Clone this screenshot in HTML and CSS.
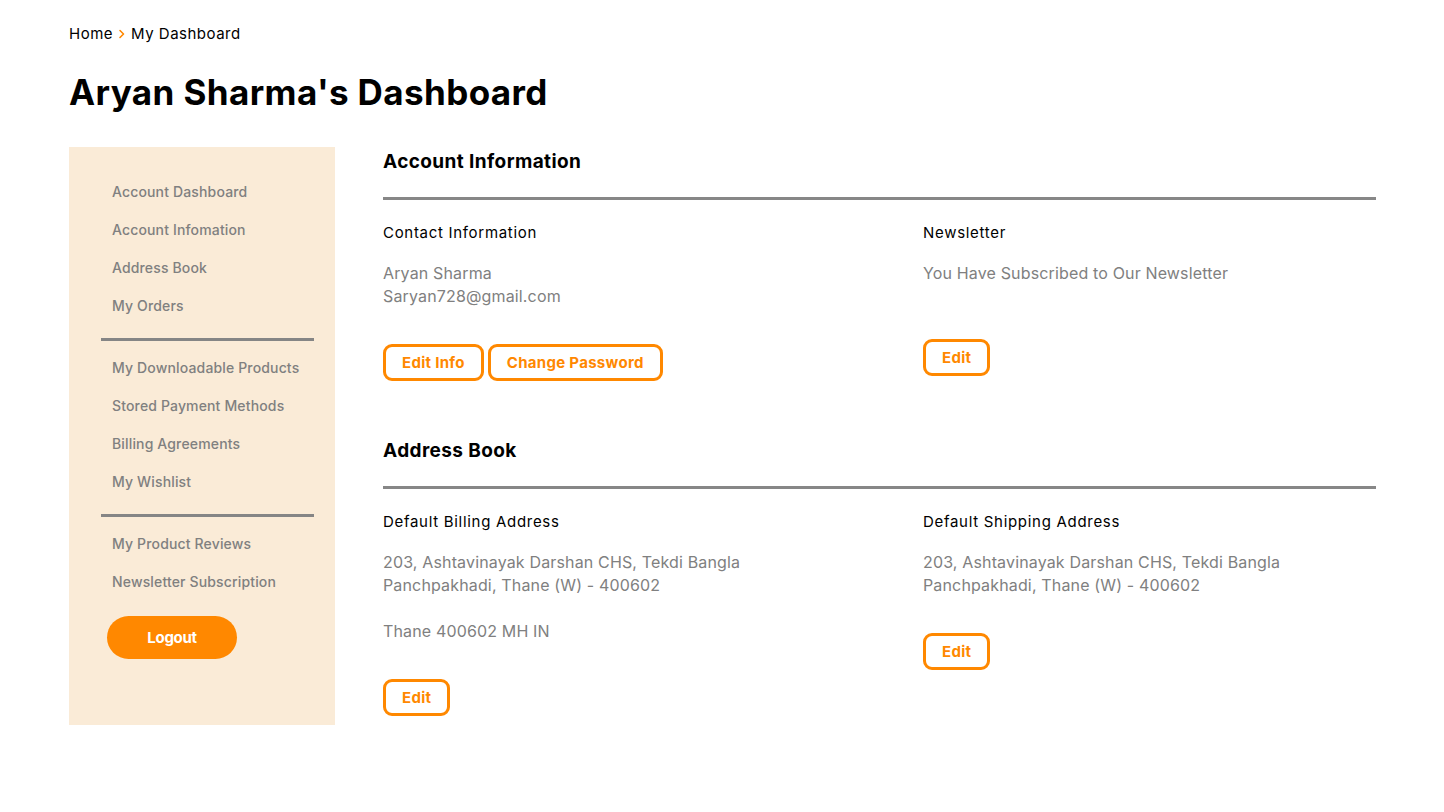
FILE: index.html
```html
<!DOCTYPE html>
<html lang="en">
<head>
<meta charset="utf-8">
<title>My Dashboard</title>
<link rel="stylesheet" href="styles.css">
</head>
<body>
<div class="page">
  <nav class="breadcrumb">
    <a href="#">Home</a>
    <span class="crumb-sep"><svg width="8" height="10" viewBox="0 0 8 10"><path d="M2 1.5 L5.5 5 L2 8.5" fill="none" stroke="#ff8800" stroke-width="1.6" stroke-linecap="round" stroke-linejoin="round"/></svg></span>
    <span>My Dashboard</span>
  </nav>
  <h1 class="page-title">Aryan Sharma's Dashboard</h1>

  <div class="layout">
    <aside class="sidebar">
      <ul class="side-list">
        <li><a href="#">Account Dashboard</a></li>
        <li><a href="#">Account Infomation</a></li>
        <li><a href="#">Address Book</a></li>
        <li><a href="#">My Orders</a></li>
      </ul>
      <hr class="side-sep">
      <ul class="side-list">
        <li><a href="#">My Downloadable Products</a></li>
        <li><a href="#">Stored Payment Methods</a></li>
        <li><a href="#">Billing Agreements</a></li>
        <li><a href="#">My Wishlist</a></li>
      </ul>
      <hr class="side-sep">
      <ul class="side-list">
        <li><a href="#">My Product Reviews</a></li>
        <li><a href="#">Newsletter Subscription</a></li>
      </ul>
      <button class="logout">Logout</button>
    </aside>

    <main class="content">
      <section class="block">
        <h2 class="block-title">Account Information</h2>
        <hr class="block-sep">
        <div class="cols">
          <div class="col">
            <h3 class="col-title">Contact Information</h3>
            <p class="col-text">Aryan Sharma<br>Saryan728@gmail.com</p>
            <div class="actions">
              <button class="btn">Edit Info</button>
              <button class="btn">Change Password</button>
            </div>
          </div>
          <div class="col">
            <h3 class="col-title">Newsletter</h3>
            <p class="col-text">You Have Subscribed to Our Newsletter</p>
            <div class="actions actions-news">
              <button class="btn">Edit</button>
            </div>
          </div>
        </div>
      </section>

      <section class="block block-address">
        <h2 class="block-title">Address Book</h2>
        <hr class="block-sep">
        <div class="cols">
          <div class="col">
            <h3 class="col-title">Default Billing Address</h3>
            <p class="col-text">203, Ashtavinayak Darshan CHS, Tekdi Bangla<br>Panchpakhadi, Thane (W) - 400602<br><br>Thane 400602 MH IN</p>
            <div class="actions">
              <button class="btn">Edit</button>
            </div>
          </div>
          <div class="col">
            <h3 class="col-title">Default Shipping Address</h3>
            <p class="col-text">203, Ashtavinayak Darshan CHS, Tekdi Bangla<br>Panchpakhadi, Thane (W) - 400602</p>
            <div class="actions">
              <button class="btn">Edit</button>
            </div>
          </div>
        </div>
      </section>
    </main>
  </div>
</div>
</body>
</html>
```

FILE: styles.css
```css
* {
  box-sizing: border-box;
}

html, body {
  margin: 0;
  padding: 0;
  background: #ffffff;
}

body {
  font-family: "Inter", "Open Sans", "DejaVu Sans", sans-serif;
  color: #000;
}

.page {
  padding: 23px 68px 40px 69px;
}

.breadcrumb {
  display: flex;
  align-items: center;
  gap: 5px;
  font-size: 15px;
  line-height: 22px;
  letter-spacing: 0.5px;
  color: #000;
}

.breadcrumb a {
  color: #000;
  text-decoration: none;
}

.crumb-sep {
  display: flex;
  align-items: center;
}

.page-title {
  margin: 23px 0 0;
  font-size: 35px;
  line-height: 48px;
  font-weight: 700;
  letter-spacing: 0.4px;
}

.layout {
  display: flex;
  align-items: flex-start;
  gap: 48px;
  margin-top: 31px;
}

.sidebar {
  flex: 0 0 266px;
  background: #faebd7;
  padding: 26px 21px 66px 32px;
}

.side-list {
  list-style: none;
  margin: 0;
  padding: 0;
}

.side-list li {
  font-size: 14px;
  line-height: 38px;
  padding-left: 11px;
}

.side-list a {
  color: #808080;
  text-decoration: none;
  font-weight: 500;
  letter-spacing: 0.15px;
}

.side-sep {
  border: 0;
  height: 3px;
  background: #858585;
  margin: 13px 0 8px;
}

.logout {
  display: block;
  margin: 15px 0 0 6px;
  width: 130px;
  height: 43px;
  border: 0;
  border-radius: 22px;
  background: #ff8800;
  color: #fff;
  font-family: inherit;
  font-size: 15px;
  font-weight: 700;
  letter-spacing: -0.3px;
}

.content {
  flex: 1;
  min-width: 0;
}

.block-title {
  margin: 0;
  padding-top: 1px;
  font-size: 19px;
  line-height: 28px;
  font-weight: 700;
  letter-spacing: 0.4px;
}

.block-sep {
  border: 0;
  height: 3px;
  background: #878787;
  margin: 21px 0 0;
}

.cols {
  display: grid;
  grid-template-columns: 540px 1fr;
}

.col-title {
  margin: 21.5px 0 0;
  font-size: 15px;
  line-height: 22px;
  font-weight: 400;
  letter-spacing: 0.7px;
}

.col-text {
  margin: 18px 0 0;
  font-size: 16px;
  line-height: 23px;
  letter-spacing: 0.15px;
  color: #808080;
}

.actions {
  display: flex;
  gap: 4px;
  margin-top: 36.5px;
}

.actions-news {
  margin-top: 54.5px;
}

.btn {
  height: 37px;
  padding: 0 16px;
  border: 3px solid #ff8800;
  border-radius: 9px;
  background: #fff;
  color: #ff8800;
  font-family: inherit;
  font-size: 15px;
  font-weight: 700;
  letter-spacing: 0.3px;
}

.block-address {
  margin-top: 55px;
}
```
